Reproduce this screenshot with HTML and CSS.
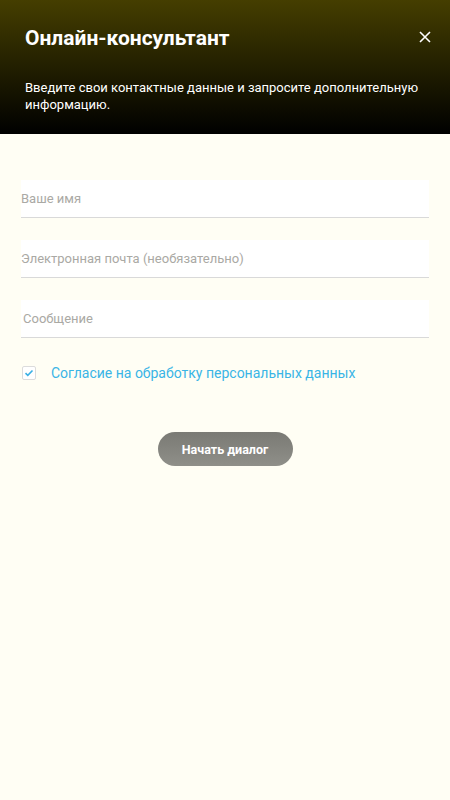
FILE: index.html
```html
<!DOCTYPE html>
<html lang="ru">
<head>
<meta charset="utf-8">
<link rel="stylesheet" href="styles.css">
</head>
<body>
<div class="widget">
  <header class="head">
    <div class="head-top">
      <h1 class="title">Онлайн-консультант</h1>
      <button class="close" aria-label="Закрыть">
        <svg width="12" height="12" viewBox="0 0 12 12"><path d="M1 1L11 11M11 1L1 11" stroke="#fff" stroke-width="1.6" fill="none"/></svg>
      </button>
    </div>
    <p class="subtitle">Введите свои контактные данные и запросите дополнительную информацию.</p>
  </header>
  <form class="form">
    <input class="field" type="text" placeholder="Ваше имя">
    <input class="field" type="text" placeholder="Электронная почта (необязательно)">
    <textarea class="field area" placeholder="Сообщение"></textarea>
    <label class="agree">
      <span class="box">
        <svg width="10" height="8" viewBox="0 0 10 8"><path d="M1.5 4.2L3.8 6.3L8.5 1.5" stroke="#3ab0e4" stroke-width="1.6" fill="none"/></svg>
      </span>
      <span class="agree-text">Согласие на обработку персональных данных</span>
    </label>
    <div class="actions">
      <button type="button" class="start">Начать диалог</button>
    </div>
  </form>
</div>
</body>
</html>
```
FILE: styles.css
```css
* { box-sizing: border-box; }
html, body { margin: 0; padding: 0; }
body {
  width: 450px;
  height: 800px;
  background: #fffef4;
  font-family: Roboto, "Liberation Sans", Arial, sans-serif;
}
.widget { display: flex; flex-direction: column; }
.head {
  height: 134px;
  padding: 26px 19px 0 25px;
  background: linear-gradient(180deg, #453e00 0%, #221f00 50%, #000 100%);
  color: #fff;
}
.head-top {
  display: flex;
  justify-content: space-between;
  align-items: center;
}
.title {
  margin: 0;
  font-size: 21px;
  line-height: 24px;
  font-weight: 700;
}
.close {
  background: none;
  border: 0;
  padding: 0;
  width: 12px;
  height: 12px;
  display: flex;
  cursor: pointer;
  margin-top: -2px;
}
.subtitle {
  margin: 29px 0 0;
  font-size: 13px;
  line-height: 17px;
  padding-right: 8px;
}
.form {
  padding: 46px 21px 0;
  display: flex;
  flex-direction: column;
}
.field {
  display: block;
  width: 408px;
  height: 38px;
  margin: 0 0 22px;
  padding: 0;
  border: 0;
  border-bottom: 1px solid #d9d9d9;
  background: #fff;
  font-family: inherit;
  font-size: 13px;
  color: #333;
  outline: none;
}
.field::placeholder { color: #aaa9a4; }
.area {
  resize: none;
  padding: 10px 2px 0;
  line-height: 17px;
  margin-bottom: 28px;
}
.agree {
  display: flex;
  align-items: center;
  gap: 15px;
  padding-left: 1px;
  height: 14px;
}
.box {
  width: 14px;
  height: 14px;
  border: 1px solid #dcdcdc;
  border-radius: 2px;
  background: #fff;
  display: flex;
  align-items: center;
  justify-content: center;
}
.agree-text {
  color: #3ab5e6;
  font-size: 14px;
  line-height: 16px;
}
.actions {
  display: flex;
  justify-content: center;
  margin-top: 52px;
}
.start {
  width: 135px;
  height: 34px;
  border: 0;
  border-radius: 17px;
  background: linear-gradient(180deg, #7a7a74 0%, #8f8f89 100%);
  color: #fff;
  font-family: inherit;
  font-weight: 700;
  font-size: 12.5px;
  cursor: pointer;
}
```
